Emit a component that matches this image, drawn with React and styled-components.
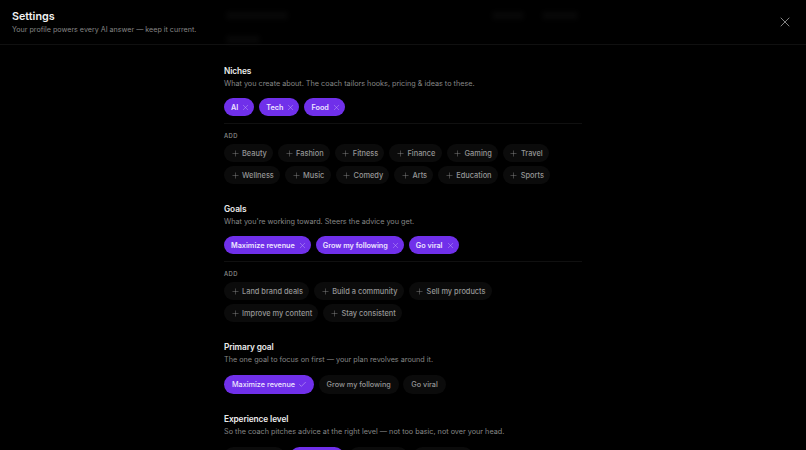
import React from "react";
import styled, { createGlobalStyle } from "styled-components";
import { X, Plus, Check } from "lucide-react";

const Global = createGlobalStyle`
  html, body { margin: 0; height: 100%; background: #000; overflow: hidden; }
  body { font-family: Inter, "Liberation Sans", sans-serif; -webkit-font-smoothing: antialiased; }
  * { box-sizing: border-box; }
`;
const Page = styled.div`position: relative; width: 806px; height: 450px; overflow: hidden; background: #000; color: #fff;`;
const Ghost = styled.span`
  position: absolute; left: ${p => p.$x}px; top: ${p => p.$y}px; width: ${p => p.$w}px; height: 7px;
  background: #080808; filter: blur(2.5px); border-radius: 3px;
`;
const Header = styled.header`
  position: relative; height: 45px; padding: 10px 13.5px 0 12px; border-bottom: 1px solid #101010;
  display: flex; justify-content: space-between; align-items: flex-start;
`;
const Title = styled.h1`margin: 0; font-size: 10.75px; line-height: 13px; font-weight: 600; color: #f2f2f2;`;
const Subtitle = styled.p`margin: 1px 0 0; font-size: 7.15px; line-height: 11px; color: #868686;`;
const Close = styled.button`
  border: 0; background: none; padding: 0; margin: 4px 0 0; color: #c4c4c4;
  width: 16px; height: 16px; display: flex;
`;
const Main = styled.main`position: relative; width: 358px; margin-left: 224px; padding-top: 20px;`;
const Section = styled.section`margin-bottom: 19px;`;
const Heading = styled.h2`margin: 0; font-size: 8.3px; line-height: 12px; font-weight: 600; letter-spacing: -0.1px; color: #ececec;`;
const Hint = styled.p`margin: 1px 0 0; font-size: 7.25px; line-height: 12px; color: #868686;`;
const Selected = styled.div`
  display: flex; gap: 5px; margin-top: 8px; padding-bottom: 7px; border-bottom: 1px solid #101010;
`;
const Chip = styled.span`
  height: 18px; padding: 0 4px 0 7px; border-radius: 9px; background: #7030ea; color: #eee6ff;
  display: inline-flex; align-items: center; gap: 3px; font-size: 7.25px; font-weight: 600;
  svg { color: #cdb8fa; }
`;
const AddLabel = styled.div`margin-top: 7px; font-size: 5.8px; line-height: 9px; letter-spacing: .5px; font-weight: 500; color: #909090;`;
const Options = styled.div`display: flex; gap: 5px; margin-top: 4px; &:first-of-type { margin-top: 5px; }`;
const Option = styled.span`
  height: 18px; padding: 0 6.2px 0 6.5px; border-radius: 9px; background: #0b0b0b; color: #969696;
  display: inline-flex; align-items: center; gap: 2.5px; font-size: 7.4px; font-weight: 500;
`;
const Choices = styled.div`display: flex; gap: 4.5px; margin-top: 9px;`;
const Choice = styled.span`
  height: 19px; padding: 0 ${p => (p.$on ? 7.5 : 8)}px 0 8px; border-radius: 10px; font-size: 7.25px; font-weight: 500;
  display: inline-flex; align-items: center; gap: 2.5px;
  width: ${p => (p.$w ? `${p.$w}px` : "auto")};
  background: ${p => (p.$on ? "#7030ea" : "#0b0b0b")};
  color: ${p => (p.$on ? "#eee6ff" : "#969696")};
  svg { color: #ddd0fb; }
`;
const Levels = styled(Choices)`gap: 5px;`;

const niches = [["Beauty","Fashion","Fitness","Finance","Gaming","Travel"],["Wellness","Music","Comedy","Arts","Education","Sports"]];
const goals = [["Land brand deals","Build a community","Sell my products"],["Improve my content","Stay consistent"]];
const Selection = ({ items }) => (
  <Selected>{items.map(t => <Chip key={t}>{t}<X size={9} strokeWidth={1.1} /></Chip>)}</Selected>
);
const Adds = ({ rows }) => (
  <>
    <AddLabel>ADD</AddLabel>
    {rows.map(r => (
      <Options key={r[0]}>{r.map(t => <Option key={t}><Plus size={9} strokeWidth={1.1} />{t}</Option>)}</Options>
    ))}
  </>
);

export default function App() {
  return (
    <Page>
      <Global />
      <Ghost $x={226} $y={12} $w={62} />
      <Ghost $x={492} $y={12} $w={32} />
      <Ghost $x={542} $y={12} $w={36} />
      <Ghost $x={226} $y={36} $w={34} />
      <Header>
        <div>
          <Title>Settings</Title>
          <Subtitle>Your profile powers every AI answer — keep it current.</Subtitle>
        </div>
        <Close aria-label="Close"><X size={16} strokeWidth={1} /></Close>
      </Header>
      <Main>
        <Section>
          <Heading>Niches</Heading>
          <Hint>What you create about. The coach tailors hooks, pricing &amp; ideas to these.</Hint>
          <Selection items={["AI","Tech","Food"]} />
          <Adds rows={niches} />
        </Section>
        <Section>
          <Heading>Goals</Heading>
          <Hint>What you're working toward. Steers the advice you get.</Hint>
          <Selection items={["Maximize revenue","Grow my following","Go viral"]} />
          <Adds rows={goals} />
        </Section>
        <Section>
          <Heading>Primary goal</Heading>
          <Hint>The one goal to focus on first — your plan revolves around it.</Hint>
          <Choices>
            <Choice $on>Maximize revenue<Check size={9} strokeWidth={1.2} /></Choice>
            <Choice>Grow my following</Choice>
            <Choice>Go viral</Choice>
          </Choices>
        </Section>
        <Section>
          <Heading>Experience level</Heading>
          <Hint>So the coach pitches advice at the right level — not too basic, not over your head.</Hint>
          <Levels>
            <Choice $w={61} />
            <Choice $w={54} $on />
            <Choice $w={59} />
            <Choice $w={60} />
          </Levels>
        </Section>
      </Main>
    </Page>
  );
}
